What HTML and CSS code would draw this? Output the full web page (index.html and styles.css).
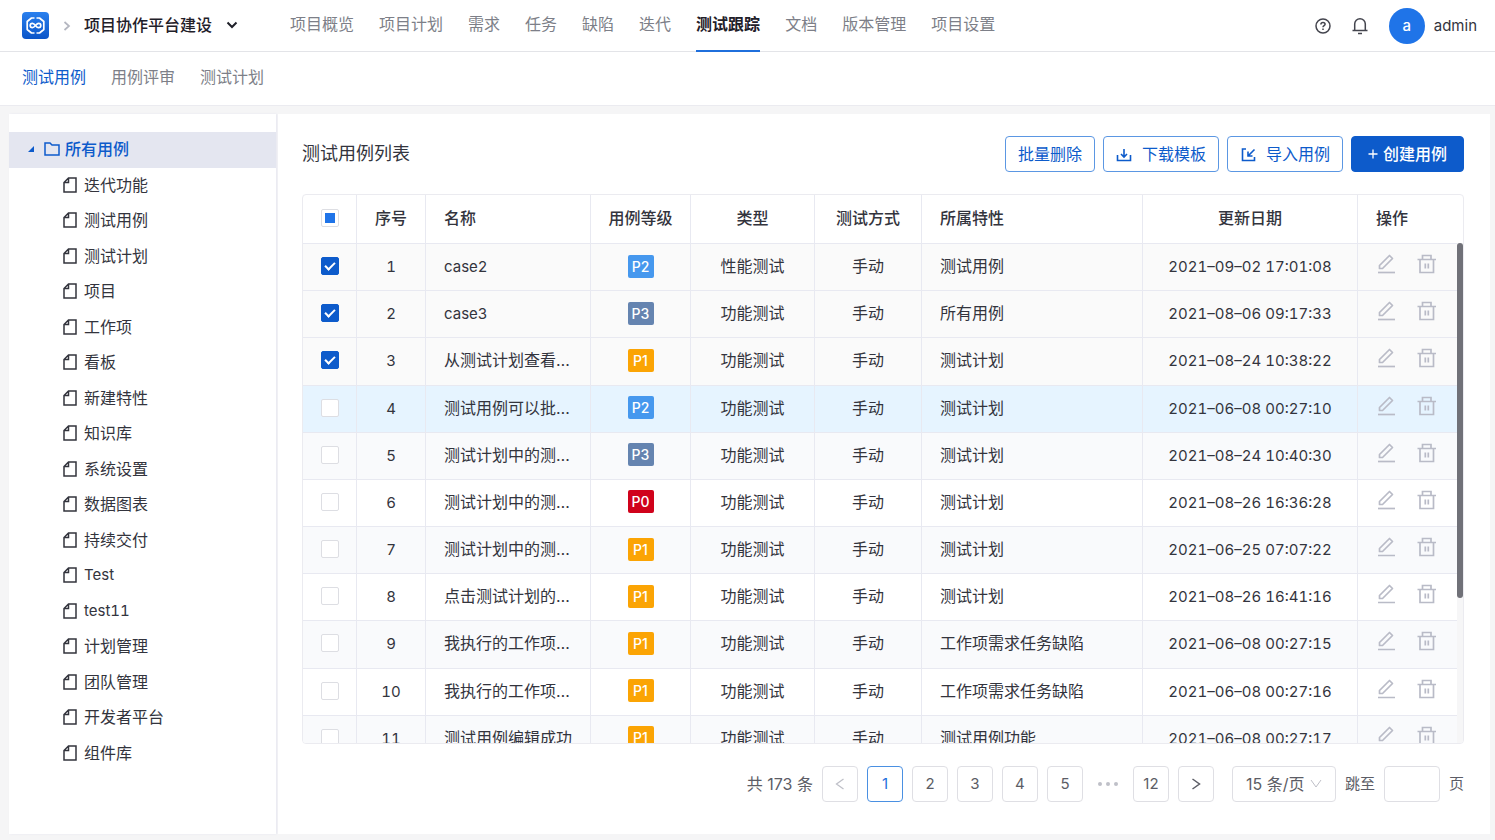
FILE: index.html
```html
<!DOCTYPE html>
<html lang="zh-CN">
<head>
    <meta charset="UTF-8">
    <meta name="viewport" content="width=device-width, initial-scale=1.0">
    <title>测试用例</title>
    <link rel="stylesheet" href="styles.css">
</head>
<body>
    <svg class="sprite" aria-hidden="true">
        <symbol id="icon-file" viewBox="0 0 14 16">
            <path d="M5.500 1H13v14H1V5.500zM5.500 1v4.500H1" fill="none" stroke="currentColor" stroke-width="1.500"/>
        </symbol>
        <symbol id="icon-edit" viewBox="0 0 18 20">
            <path d="M0 18.500h17" fill="none" stroke="currentColor" stroke-width="1.700"/>
            <path d="M1.500 14.500v-3L11.500 1.500l3 3L4.500 14.500z" fill="none" stroke="currentColor" stroke-width="1.700" stroke-linejoin="round"/>
        </symbol>
        <symbol id="icon-trash" viewBox="0 0 20 20">
            <path d="M.5 5.500h18.500M3 5.500v13h13.500v-13M5.500 5.500v-4h8.500v4M8.300 9.500v5M11.300 9.500v5" fill="none" stroke="currentColor" stroke-width="1.700"/>
        </symbol>
    </svg>

    <header class="topbar">
        <a class="logo" href="#" aria-label="首页">
            <svg width="27" height="27" viewBox="0 0 27 27">
                <defs>
                    <linearGradient id="logo-bg" x1="0" y1="0" x2="0" y2="1">
                        <stop offset="0" stop-color="#2a80ee"/>
                        <stop offset="1" stop-color="#0b55c8"/>
                    </linearGradient>
                </defs>
                <rect width="27" height="27" rx="4" fill="url(#logo-bg)"/>
                <path d="M12.500 6H9.500L5.200 9.500v8L9.500 21h3M14.500 6h3l4.300 3.500v8L17.500 21h-3" fill="none" stroke="#fff" stroke-width="1.700" stroke-linejoin="round"/>
                <path d="M13.500 13.500c-1.200-1.600-2-2.200-3.100-2.200a2.200 2.200 0 0 0 0 4.400c2.400 0 3.800-4.400 6.200-4.400a2.200 2.200 0 0 1 0 4.400c-1.100 0-1.900-.6-3.100-2.200z" fill="none" stroke="#fff" stroke-width="1.700"/>
            </svg>
        </a>
        <svg class="crumb-arrow" width="8" height="10" viewBox="0 0 8 10"><path d="M1.500 1l4.500 4-4.500 4" fill="none" stroke="currentColor" stroke-width="1.700"/></svg>
        <button class="project" type="button">
            项目协作平台建设
            <svg width="12" height="8" viewBox="0 0 12 8"><path d="M1.500 1.500L6 6l4.500-4.500" fill="none" stroke="currentColor" stroke-width="2"/></svg>
        </button>
        <nav class="menu">
            <a href="#">项目概览</a>
            <a href="#">项目计划</a>
            <a href="#">需求</a>
            <a href="#">任务</a>
            <a href="#">缺陷</a>
            <a href="#">迭代</a>
            <a class="active" href="#">测试跟踪</a>
            <a href="#">文档</a>
            <a href="#">版本管理</a>
            <a href="#">项目设置</a>
        </nav>
        <div class="user">
            <button class="icon-btn" type="button" aria-label="帮助">
                <svg width="16" height="16" viewBox="0 0 16 16" fill="none" stroke="currentColor" stroke-width="1.500">
                    <circle cx="8" cy="8" r="7"/>
                    <path d="M5.900 6.500c0-1.300.9-2.100 2.100-2.100s2.100.7 2.100 1.800c0 1.400-2.100 1.500-2.100 3.100M8 10.500v1.500"/>
                </svg>
            </button>
            <button class="icon-btn" type="button" aria-label="通知">
                <svg width="16" height="18" viewBox="0 0 16 18" fill="none" stroke="currentColor" stroke-width="1.500">
                    <path d="M.5 13.500h15M2.700 13.500V7a5.300 5.300 0 0 1 10.600 0v6.500M6 16.500h4"/>
                </svg>
            </button>
            <span class="avatar">a</span>
            <span class="user-name">admin</span>
        </div>
    </header>

    <nav class="subnav">
        <a class="active" href="#">测试用例</a>
        <a href="#">用例评审</a>
        <a href="#">测试计划</a>
    </nav>

    <div class="page">
        <aside class="sidebar">
            <ul class="tree">
                <li class="root">
                    <svg width="6" height="6" viewBox="0 0 6 6"><path d="M6 0v6H0z" fill="currentColor"/></svg>
                    <svg class="folder" width="16" height="14" viewBox="0 0 16 14"><path d="M1 1h5l2 2h7v10H1z" fill="none" stroke="currentColor" stroke-width="1.500"/></svg>
                    <a href="#">所有用例</a>
                </li>
                <li><svg class="file"><use href="#icon-file"/></svg><a href="#">迭代功能</a></li>
                <li><svg class="file"><use href="#icon-file"/></svg><a href="#">测试用例</a></li>
                <li><svg class="file"><use href="#icon-file"/></svg><a href="#">测试计划</a></li>
                <li><svg class="file"><use href="#icon-file"/></svg><a href="#">项目</a></li>
                <li><svg class="file"><use href="#icon-file"/></svg><a href="#">工作项</a></li>
                <li><svg class="file"><use href="#icon-file"/></svg><a href="#">看板</a></li>
                <li><svg class="file"><use href="#icon-file"/></svg><a href="#">新建特性</a></li>
                <li><svg class="file"><use href="#icon-file"/></svg><a href="#">知识库</a></li>
                <li><svg class="file"><use href="#icon-file"/></svg><a href="#">系统设置</a></li>
                <li><svg class="file"><use href="#icon-file"/></svg><a href="#">数据图表</a></li>
                <li><svg class="file"><use href="#icon-file"/></svg><a href="#">持续交付</a></li>
                <li><svg class="file"><use href="#icon-file"/></svg><a class="latin" href="#">Test</a></li>
                <li><svg class="file"><use href="#icon-file"/></svg><a class="latin" href="#">test11</a></li>
                <li><svg class="file"><use href="#icon-file"/></svg><a href="#">计划管理</a></li>
                <li><svg class="file"><use href="#icon-file"/></svg><a href="#">团队管理</a></li>
                <li><svg class="file"><use href="#icon-file"/></svg><a href="#">开发者平台</a></li>
                <li><svg class="file"><use href="#icon-file"/></svg><a href="#">组件库</a></li>
            </ul>
        </aside>

        <main class="main">
            <div class="toolbar">
                <h1>测试用例列表</h1>
                <button class="btn" type="button">批量删除</button>
                <button class="btn" type="button">
                    <svg width="16" height="16" viewBox="0 0 16 16" fill="none" stroke="currentColor" stroke-width="1.600"><path d="M1.500 9v5.500h13V9M8 3v7.500M5 8l3 3 3-3"/></svg>
                    下载模板
                </button>
                <button class="btn" type="button">
                    <svg width="16" height="16" viewBox="0 0 16 16" fill="none" stroke="currentColor" stroke-width="1.600"><path d="M6 3H2.500v11.500h12V11M14.500 3.500L8.500 9.500M8 5.500V10H12.500"/></svg>
                    导入用例
                </button>
                <button class="btn btn-primary" type="button">
                    <svg width="10" height="10" viewBox="0 0 10 10"><path d="M5 .5v9M.5 5h9" stroke="currentColor" stroke-width="1.300"/></svg>
                    创建用例
                </button>
            </div>

            <div class="table-wrap">
                <table class="cases">
                    <colgroup>
                        <col class="w-check"><col class="w-no"><col class="w-name"><col class="w-level"><col class="w-type"><col class="w-mode"><col><col class="w-date"><col class="w-ops">
                    </colgroup>
                    <thead>
                        <tr>
                            <th><input class="check partial" type="checkbox" aria-label="全选"></th>
                            <th>序号</th>
                            <th class="left">名称</th>
                            <th>用例等级</th>
                            <th>类型</th>
                            <th>测试方式</th>
                            <th class="left">所属特性</th>
                            <th>更新日期</th>
                            <th class="left">操作</th>
                        </tr>
                    </thead>
                    <tbody>
                        <tr class="checked">
                            <td><input class="check" type="checkbox" aria-label="1" checked></td>
                            <td class="latin">1</td>
                            <td class="left latin">case2</td>
                            <td><span class="level p2">P2</span></td>
                            <td>性能测试</td>
                            <td>手动</td>
                            <td class="left">测试用例</td>
                            <td class="latin">2021–09–02 17:01:08</td>
                            <td><div class="ops"><button type="button" aria-label="编辑"><svg class="edit"><use href="#icon-edit"/></svg></button><button type="button" aria-label="删除"><svg class="trash"><use href="#icon-trash"/></svg></button></div></td>
                        </tr>
                        <tr class="checked">
                            <td><input class="check" type="checkbox" aria-label="2" checked></td>
                            <td class="latin">2</td>
                            <td class="left latin">case3</td>
                            <td><span class="level p3">P3</span></td>
                            <td>功能测试</td>
                            <td>手动</td>
                            <td class="left">所有用例</td>
                            <td class="latin">2021–08–06 09:17:33</td>
                            <td><div class="ops"><button type="button" aria-label="编辑"><svg class="edit"><use href="#icon-edit"/></svg></button><button type="button" aria-label="删除"><svg class="trash"><use href="#icon-trash"/></svg></button></div></td>
                        </tr>
                        <tr class="checked">
                            <td><input class="check" type="checkbox" aria-label="3" checked></td>
                            <td class="latin">3</td>
                            <td class="left">从测试计划查看…</td>
                            <td><span class="level p1">P1</span></td>
                            <td>功能测试</td>
                            <td>手动</td>
                            <td class="left">测试计划</td>
                            <td class="latin">2021–08–24 10:38:22</td>
                            <td><div class="ops"><button type="button" aria-label="编辑"><svg class="edit"><use href="#icon-edit"/></svg></button><button type="button" aria-label="删除"><svg class="trash"><use href="#icon-trash"/></svg></button></div></td>
                        </tr>
                        <tr class="hover">
                            <td><input class="check" type="checkbox" aria-label="4"></td>
                            <td class="latin">4</td>
                            <td class="left">测试用例可以批…</td>
                            <td><span class="level p2">P2</span></td>
                            <td>功能测试</td>
                            <td>手动</td>
                            <td class="left">测试计划</td>
                            <td class="latin">2021–06–08 00:27:10</td>
                            <td><div class="ops"><button type="button" aria-label="编辑"><svg class="edit"><use href="#icon-edit"/></svg></button><button type="button" aria-label="删除"><svg class="trash"><use href="#icon-trash"/></svg></button></div></td>
                        </tr>
                        <tr>
                            <td><input class="check" type="checkbox" aria-label="5"></td>
                            <td class="latin">5</td>
                            <td class="left">测试计划中的测…</td>
                            <td><span class="level p3">P3</span></td>
                            <td>功能测试</td>
                            <td>手动</td>
                            <td class="left">测试计划</td>
                            <td class="latin">2021–08–24 10:40:30</td>
                            <td><div class="ops"><button type="button" aria-label="编辑"><svg class="edit"><use href="#icon-edit"/></svg></button><button type="button" aria-label="删除"><svg class="trash"><use href="#icon-trash"/></svg></button></div></td>
                        </tr>
                        <tr>
                            <td><input class="check" type="checkbox" aria-label="6"></td>
                            <td class="latin">6</td>
                            <td class="left">测试计划中的测…</td>
                            <td><span class="level p0">P0</span></td>
                            <td>功能测试</td>
                            <td>手动</td>
                            <td class="left">测试计划</td>
                            <td class="latin">2021–08–26 16:36:28</td>
                            <td><div class="ops"><button type="button" aria-label="编辑"><svg class="edit"><use href="#icon-edit"/></svg></button><button type="button" aria-label="删除"><svg class="trash"><use href="#icon-trash"/></svg></button></div></td>
                        </tr>
                        <tr>
                            <td><input class="check" type="checkbox" aria-label="7"></td>
                            <td class="latin">7</td>
                            <td class="left">测试计划中的测…</td>
                            <td><span class="level p1">P1</span></td>
                            <td>功能测试</td>
                            <td>手动</td>
                            <td class="left">测试计划</td>
                            <td class="latin">2021–06–25 07:07:22</td>
                            <td><div class="ops"><button type="button" aria-label="编辑"><svg class="edit"><use href="#icon-edit"/></svg></button><button type="button" aria-label="删除"><svg class="trash"><use href="#icon-trash"/></svg></button></div></td>
                        </tr>
                        <tr>
                            <td><input class="check" type="checkbox" aria-label="8"></td>
                            <td class="latin">8</td>
                            <td class="left">点击测试计划的…</td>
                            <td><span class="level p1">P1</span></td>
                            <td>功能测试</td>
                            <td>手动</td>
                            <td class="left">测试计划</td>
                            <td class="latin">2021–08–26 16:41:16</td>
                            <td><div class="ops"><button type="button" aria-label="编辑"><svg class="edit"><use href="#icon-edit"/></svg></button><button type="button" aria-label="删除"><svg class="trash"><use href="#icon-trash"/></svg></button></div></td>
                        </tr>
                        <tr>
                            <td><input class="check" type="checkbox" aria-label="9"></td>
                            <td class="latin">9</td>
                            <td class="left">我执行的工作项…</td>
                            <td><span class="level p1">P1</span></td>
                            <td>功能测试</td>
                            <td>手动</td>
                            <td class="left">工作项需求任务缺陷</td>
                            <td class="latin">2021–06–08 00:27:15</td>
                            <td><div class="ops"><button type="button" aria-label="编辑"><svg class="edit"><use href="#icon-edit"/></svg></button><button type="button" aria-label="删除"><svg class="trash"><use href="#icon-trash"/></svg></button></div></td>
                        </tr>
                        <tr>
                            <td><input class="check" type="checkbox" aria-label="10"></td>
                            <td class="latin">10</td>
                            <td class="left">我执行的工作项…</td>
                            <td><span class="level p1">P1</span></td>
                            <td>功能测试</td>
                            <td>手动</td>
                            <td class="left">工作项需求任务缺陷</td>
                            <td class="latin">2021–06–08 00:27:16</td>
                            <td><div class="ops"><button type="button" aria-label="编辑"><svg class="edit"><use href="#icon-edit"/></svg></button><button type="button" aria-label="删除"><svg class="trash"><use href="#icon-trash"/></svg></button></div></td>
                        </tr>
                        <tr>
                            <td><input class="check" type="checkbox" aria-label="11"></td>
                            <td class="latin">11</td>
                            <td class="left">测试用例编辑成功</td>
                            <td><span class="level p1">P1</span></td>
                            <td>功能测试</td>
                            <td>手动</td>
                            <td class="left">测试用例功能</td>
                            <td class="latin">2021–06–08 00:27:17</td>
                            <td><div class="ops"><button type="button" aria-label="编辑"><svg class="edit"><use href="#icon-edit"/></svg></button><button type="button" aria-label="删除"><svg class="trash"><use href="#icon-trash"/></svg></button></div></td>
                        </tr>
                    </tbody>
                </table>
                <div class="scrollbar"><div class="thumb"></div></div>
            </div>

            <div class="pagination">
                <span class="total">共 173 条</span>
                <button class="page-btn prev" type="button" aria-label="上一页" disabled>
                    <svg width="10" height="12" viewBox="0 0 10 12"><path d="M8.500 1L1.500 6l7 5" fill="none" stroke="currentColor" stroke-width="1.300"/></svg>
                </button>
                <button class="page-btn current" type="button">1</button>
                <button class="page-btn" type="button">2</button>
                <button class="page-btn" type="button">3</button>
                <button class="page-btn" type="button">4</button>
                <button class="page-btn" type="button">5</button>
                <svg class="dots" width="32" height="4" viewBox="4 0 32 4" fill="currentColor"><circle cx="12" cy="2" r="2"/><circle cx="20" cy="2" r="2"/><circle cx="28" cy="2" r="2"/></svg>
                <button class="page-btn" type="button">12</button>
                <button class="page-btn" type="button" aria-label="下一页">
                    <svg width="10" height="12" viewBox="0 0 10 12"><path d="M1.500 1l7 5-7 5" fill="none" stroke="currentColor" stroke-width="1.500"/></svg>
                </button>
                <div class="page-size">
                    <select aria-label="每页条数"><option>15 条/页</option></select>
                    <svg width="12" height="9" viewBox="0 0 12 9"><path d="M1 1l5 7 5-7" fill="none" stroke="currentColor"/></svg>
                </div>
                <label for="jump">跳至</label>
                <input id="jump" class="jump" type="text">
                <span>页</span>
            </div>
        </main>
    </div>
</body>
</html>
```

FILE: styles.css
```css
* {
    margin: 0;
    padding: 0;
    box-sizing: border-box;
}

body {
    display: flex;
    flex-direction: column;
    height: 100vh;
    background: #f5f5f6;
    color: #33343d;
    font-family: Inter, "Noto Sans CJK SC", sans-serif;
    font-size: 16px;
    line-height: 24px;
}

a {
    color: inherit;
    text-decoration: none;
}

button,
input,
select {
    font: inherit;
    color: inherit;
}

button {
    background: none;
    border: none;
    cursor: pointer;
}

svg {
    display: block;
    flex: none;
}

.sprite {
    position: absolute;
    width: 0;
    height: 0;
}

.latin {
    font-size: 15px;
    font-variant-numeric: tabular-nums;
}

/* top bar */
.topbar {
    display: flex;
    align-items: center;
    height: 52px;
    padding: 0 18px 0 22px;
    background: #fff;
    border-bottom: 1px solid #e3e4e8;
}

.crumb-arrow {
    margin: 0 13px 0 14px;
    color: #b4b6c0;
}

.project {
    display: flex;
    align-items: center;
    gap: 14px;
    padding-bottom: 2px;
    color: #1f2029;
    font-weight: 500;
}

.menu {
    display: flex;
    gap: 25px;
    align-self: flex-start;
    margin-left: 52px;
    color: #7d7f88;
}

.menu a {
    height: 53px;
    line-height: 48px;
}

.menu .active {
    color: #1f2029;
    font-weight: 700;
    border-bottom: 3px solid #1f6fdc;
}

.user {
    display: flex;
    align-items: center;
    margin-left: auto;
    font-size: 15px;
}

.icon-btn {
    margin-right: 21px;
    color: #44454e;
}

.avatar {
    width: 36px;
    height: 36px;
    border-radius: 50%;
    background: #1f74e8;
    color: #fff;
    font-weight: 500;
    line-height: 36px;
    text-align: center;
}

.user-name {
    margin-left: 9px;
}

.subnav {
    display: flex;
    gap: 25px;
    height: 54px;
    padding-left: 22px;
    background: #fff;
    border-bottom: 1px solid #ebebf0;
    color: #7d7f88;
    line-height: 50px;
}

.subnav .active {
    color: #0d5bcb;
}

/* layout */
.page {
    display: flex;
    flex: 1;
    gap: 2px;
    min-height: 0;
    padding: 8px 5px 6px 9px;
}

.sidebar {
    display: flex;
    flex: 0 0 267px;
    padding: 18px 0 63px;
    background: #fff;
    box-shadow: 1px 0 2px #e6e7f0;
}

.tree {
    display: flex;
    flex: 1;
    flex-direction: column;
    list-style: none;
}

.tree li {
    display: flex;
    flex: 1;
    align-items: center;
    padding: 0 0 1px 54px;
}

.tree .root {
    padding-left: 19px;
    background: #e4e6f0;
    color: #0d5bcb;
    font-weight: 500;
}

.folder {
    margin: 0 5px 0 10px;
}

.file {
    width: 14px;
    height: 16px;
    margin-right: 7px;
}

.main {
    display: flex;
    flex: 1;
    flex-direction: column;
    min-width: 0;
    padding: 22px 26px 32px 24px;
    background: #fff;
}

.toolbar {
    display: flex;
    align-items: center;
    gap: 8px;
    margin-bottom: 22px;
}

.toolbar h1 {
    flex: 1;
    font-size: 18px;
    font-weight: 400;
}

.btn {
    display: flex;
    align-items: center;
    gap: 10px;
    height: 36px;
    padding: 0 12px 1px;
    border: 1px solid #5b97e3;
    border-radius: 4px;
    color: #0d5bcb;
}

.btn-primary {
    gap: 5px;
    padding: 0 16px 1px;
    border-color: #0d5bcb;
    background: #0d5bcb;
    color: #fff;
    font-weight: 500;
}

/* table */
.table-wrap {
    position: relative;
    flex: 1;
    min-height: 0;
    padding-right: 6px;
    overflow: hidden;
    border: 1px solid #ebebf0;
    border-radius: 4px;
}

.cases {
    width: 100%;
    height: 568px;
    table-layout: fixed;
    border-collapse: separate;
    border-spacing: 0;
}

.w-check { width: 54px; }
.w-no { width: 69px; }
.w-name { width: 165px; }
.w-level { width: 100px; }
.w-type { width: 124px; }
.w-mode { width: 107px; }
.w-date { width: 215px; }
.w-ops { width: 99px; }

.cases th,
.cases td {
    padding-bottom: 2px;
    border-right: 1px solid #e8e9f1;
    border-bottom: 1px solid #e8e9f1;
    text-align: center;
    vertical-align: middle;
    white-space: nowrap;
}

.cases th:last-child,
.cases td:last-child {
    border-right: none;
}

.cases th {
    height: 49px;
    font-weight: 500;
}

.cases .latin {
    padding-bottom: 0;
}

.cases .left {
    padding-left: 18px;
    text-align: left;
}

.cases tbody tr:nth-child(odd) {
    background: #f9fafc;
}

.cases tbody .checked,
.cases tbody .checked:nth-child(odd) {
    background: #fafafa;
}

.cases tbody .hover {
    background: #e6f4ff;
}

.check {
    position: relative;
    display: block;
    width: 18px;
    height: 18px;
    margin: 0 auto;
    appearance: none;
    background: #fff;
    border: 1px solid #dddee3;
    border-radius: 2px;
}

.check:checked {
    background: #0d5bcb;
    border-color: #0d5bcb;
}

.check:checked::after {
    content: "";
    position: absolute;
    top: 4px;
    left: 3px;
    width: 10px;
    height: 6px;
    box-sizing: border-box;
    border: solid #fff;
    border-width: 0 0 2px 2px;
    transform: rotate(-45deg);
}

.partial::after {
    content: "";
    position: absolute;
    top: 3px;
    left: 3px;
    width: 10px;
    height: 10px;
    background: #1f74e8;
}

.level {
    display: block;
    width: 26px;
    margin: 0 auto;
    border-radius: 2px;
    color: #fff;
    font-size: 14px;
    font-weight: 500;
    line-height: 23px;
}

.p0 { background: #d0021b; }
.p1 { background: #fba404; }
.p2 { background: #4698ee; }
.p3 { background: #6584b0; }

.ops {
    display: flex;
    gap: 21px;
    padding: 0 0 4px 20px;
    color: #b9bbc7;
}

.edit {
    width: 18px;
    height: 20px;
}

.trash {
    width: 20px;
    height: 20px;
}

.scrollbar {
    position: absolute;
    top: 48px;
    right: 0;
    bottom: 0;
    width: 6px;
    background: #f6f6f7;
}

.thumb {
    height: 71%;
    border-radius: 3px;
    background: #707178;
}

/* pagination */
.pagination {
    display: flex;
    align-items: center;
    justify-content: flex-end;
    gap: 9px;
    margin-top: 22px;
    color: #5c5d66;
    font-size: 15px;
}

.total {
    font-size: 16px;
}

.page-btn {
    display: flex;
    align-items: center;
    justify-content: center;
    width: 36px;
    height: 36px;
    border: 1px solid #dfdfe4;
    border-radius: 4px;
}

.current {
    border-color: #4a90e2;
    color: #1f6fdc;
}

.prev {
    color: #bfc0c8;
}

.dots {
    color: #bfc0c8;
}

.page-size {
    position: relative;
    margin-left: 9px;
}

.page-size select {
    width: 104px;
    height: 36px;
    padding-left: 13px;
    appearance: none;
    background: #fff;
    border: 1px solid #dfdfe4;
    border-radius: 4px;
    font-size: 16px;
}

.page-size svg {
    position: absolute;
    top: 13px;
    right: 14px;
    color: #bfc0c8;
}

.jump {
    width: 56px;
    height: 36px;
    padding: 0 8px;
    border: 1px solid #dfdfe4;
    border-radius: 4px;
}
```
